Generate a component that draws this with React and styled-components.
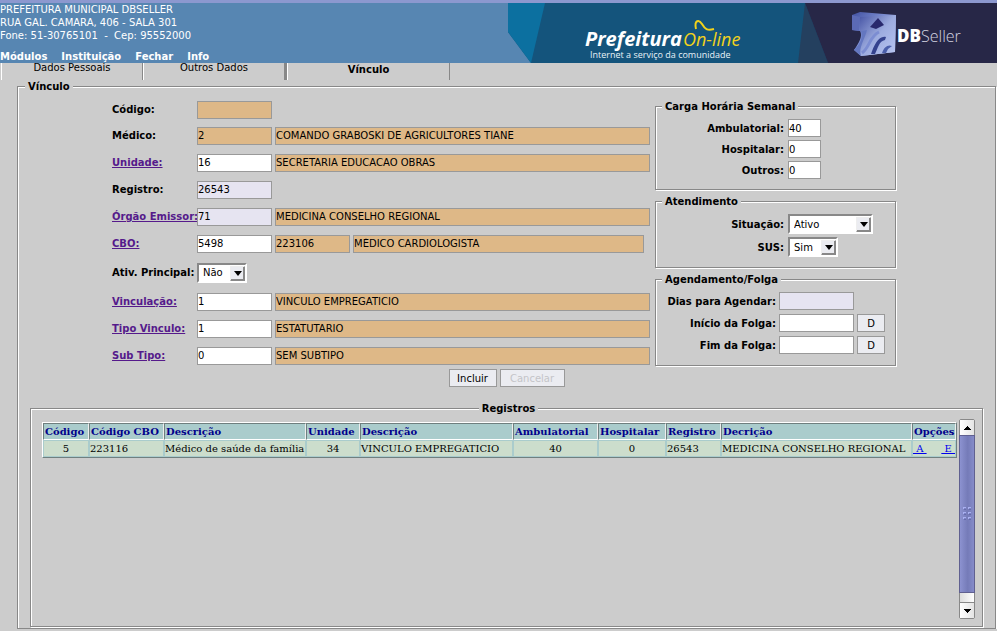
import React from "react";
import styled, { createGlobalStyle } from "styled-components";

const Global = createGlobalStyle`
  * { box-sizing: border-box; }
  html, body { margin: 0; background: #cccccc; }
  body { font: 10px/13px "DejaVu Sans", sans-serif; color: #000; overflow: hidden; }
  input, select, button { font: inherit; color: inherit; border-radius: 0; margin: 0; }
  a { color: #551a8b; }
`;

const Header = styled.header`
  display: flex;
  justify-content: space-between;
  height: 63px;
  border-top: 3px solid #4f4f84;
  border-image: linear-gradient(#8c98cf 66%, #48487a 66%) 3;
  background: #5786b2;
  color: #fff;
`;
const Identity = styled.div`
  display: flex;
  flex-direction: column;
  white-space: pre;
`;
const Menu = styled.nav`
  display: flex;
  gap: 14px;
  margin-top: 8px;
`;
const MenuLink = styled.a`
  color: #fff;
  font-weight: bold;
  text-decoration: none;
`;
const Banner = styled.svg`
  display: block;
  flex: none;
`;

const Tabs = styled.div`
  display: flex;
  height: 17px;
  padding-left: 1px;
`;
const Tab = styled.button`
  width: ${(p) => p.$width}px;
  height: 17px;
  padding: ${(p) => (p.$active ? "0 0 3px" : "0 0 7px")};
  line-height: 10px;
  border: 0;
  border-left: 1px solid #fff;
  border-right: ${(p) => p.$edge || 1}px solid #888;
  background: none;
  font-weight: ${(p) => (p.$active ? "bold" : "normal")};
`;

const Group = styled.fieldset`
  min-width: 0;
  margin: 0;
  padding: 0;
  border: 1px solid #888;
  box-shadow: 1px 1px 0 #fff, inset 1px 1px 0 #fff;
`;
const Legend = styled.legend`
  margin-left: 6px;
  padding: 0 3px;
  line-height: 13px;
  background: #ccc;
  font-weight: bold;
`;
const Main = styled(Group)`
  margin: 0 1px 0 17px;
  padding: 0 12px 1px;
`;
const MainLegend = styled(Legend)`
  margin-left: -5px;
`;

const FormArea = styled.div`
  display: flex;
  justify-content: center;
  gap: 5px;
  margin-top: 4px;
  padding-right: 5px;
`;
const Fields = styled.div`
  width: 538px;
`;
const FieldRow = styled.div`
  display: flex;
  align-items: center;
  gap: 3px;
  height: ${(p) => p.$height || 27}px;
`;
const FieldLabel = styled.label`
  width: 85px;
  margin-right: -3px;
  font-weight: bold;
  white-space: nowrap;
`;
const fills = { plain: "#fff", locked: "#deb887", soft: "#e6e4f1" };
const Input = styled.input`
  width: ${(p) => p.$width || 75}px;
  height: 18px;
  padding: 0;
  line-height: 16px;
  border: 1px solid #999;
  outline: 0;
  background: ${(p) => fills[p.$tone || "plain"]};
`;

const SelectBox = styled.span`
  position: relative;
  display: inline-block;
  width: ${(p) => p.$width}px;
  height: 20px;
  border: 2px solid;
  border-color: #888 #fff #fff #888;
  background: #fff;
`;
const Select = styled.select`
  width: 100%;
  height: 16px;
  padding: 0 16px 0 4px;
  border: 0;
  appearance: none;
  background: #fff;
  display: block;
`;
const Arrow = styled.span`
  position: absolute;
  top: 1px;
  right: 0;
  width: 15px;
  height: 15px;
  display: grid;
  place-items: center;
  border: 1px solid;
  border-color: #eee #888 #888 #eee;
  box-shadow: inset -1px -1px 0 #888;
  background: #ebecf1;
  pointer-events: none;
`;

const Side = styled.div`
  display: flex;
  flex-direction: column;
  width: 241px;
  margin-top: 3px;
  gap: 5px;
`;
const SideBody = styled.div`
  display: flex;
  flex-direction: column;
  gap: ${(p) => p.$gap}px;
  padding: ${(p) => p.$pad};
`;
const SideRow = styled.div`
  display: flex;
  align-items: center;
  gap: ${(p) => p.$gap || 4}px;
`;
const SideLabel = styled.label`
  width: ${(p) => p.$width || 128}px;
  text-align: right;
  font-weight: bold;
  white-space: nowrap;
`;
const Button = styled.button`
  width: ${(p) => p.$width}px;
  height: 18px;
  padding: 2px 0 0;
  border: 1px solid #999;
  background: #ebecf1;
  line-height: 14px;
  &:disabled { color: #c4c4c8; }
`;
const Actions = styled.div`
  display: flex;
  justify-content: center;
  gap: 3px;
  margin: 0 0 15px;
`;

const Records = styled(Group)`
  padding: 0 7px 7px 11px;
`;
const RecordsLegend = styled(Legend)`
  margin: 0 auto;
`;
const Scroller = styled.div`
  display: flex;
  gap: 4px;
  height: 200px;
  margin-top: 4px;
`;
const TableWrap = styled.div`
  flex: 1;
  min-width: 0;
  padding-top: 3px;
`;
const Table = styled.table`
  width: 100%;
  table-layout: fixed;
  border-collapse: separate;
  border-spacing: 0;
  border: 1px solid;
  border-color: #fff #6f7f7f #6f7f7f #fff;
  font: 10px/14px "DejaVu Serif", serif;
`;
const Th = styled.th`
  height: 17px;
  padding: 0 1px;
  border: 1px solid;
  border-color: #6f7f7f #eee #fff #6f7f7f;
  background: #aacccc;
  color: #00008b;
  text-align: left;
  white-space: nowrap;
`;
const Td = styled.td`
  height: 17px;
  padding: 0;
  border: 1px solid #aacccc;
  background: #ccddcc;
  text-align: ${(p) => (p.$center ? "center" : "left")};
  white-space: nowrap;
`;
const Options = styled.div`
  display: flex;
  justify-content: space-between;
`;
const Option = styled.a`
  color: #0000ee;
  white-space: pre;
`;

const Bar = styled.div`
  display: flex;
  flex-direction: column;
  width: 16px;
  background: linear-gradient(90deg, #ddd, #fff);
  border: 1px solid #888;
  border-radius: 2px;
`;
const BarButton = styled.button`
  display: grid;
  place-items: center;
  height: 15px;
  padding: 0;
  border: 0;
  background: linear-gradient(90deg, #fff, #e4e4e4);
`;
const Thumb = styled.div`
  display: grid;
  place-items: center;
  flex: 1;
  margin: 0 -1px;
  border: 1px solid #606090;
  background: linear-gradient(90deg, #8c92d0, #757bb8 55%, #858bc9);
`;
const Track = styled.div`
  height: 10px;
  border-bottom: 1px solid #888;
`;

const Triangle = ({ up }) => (
  <svg width="7" height="4" viewBox="0 0 7 4" aria-hidden="true" shapeRendering="crispEdges">
    <path d={up ? "M0 4L3.5 0L7 4Z" : "M0 0H7L3.5 4Z"} />
  </svg>
);

function Picker({ id, width, value, options }) {
  return (
    <SelectBox $width={width}>
      <Select id={id} defaultValue={value}>
        {options.map((o) => <option key={o}>{o}</option>)}
      </Select>
      <Arrow><svg width="8" height="5" viewBox="0 0 8 5"><path d="M0 0H8L4 5Z" /></svg></Arrow>
    </SelectBox>
  );
}

const rows = [
  { id: "codigo", label: "Código:", height: 25, inputs: [["", "locked"]] },
  { id: "medico", label: "Médico:", inputs: [["2", "locked"], ["COMANDO GRABOSKI DE AGRICULTORES TIANE", "locked", 375]] },
  { id: "unidade", label: "Unidade:", link: true, inputs: [["16"], ["SECRETARIA EDUCACAO OBRAS", "locked", 375]] },
  { id: "registro", label: "Registro:", inputs: [["26543", "soft"]] },
  { id: "orgao", label: "Órgão Emissor:", link: true, inputs: [["71", "soft"], ["MEDICINA CONSELHO REGIONAL", "locked", 375]] },
  { id: "cbo", label: "CBO:", link: true, inputs: [["5498"], ["223106", "locked"], ["MÉDICO CARDIOLOGISTA", "locked", 291]] },
  { id: "ativ", label: "Ativ. Principal:", height: 31, select: true },
  { id: "vinculacao", label: "Vinculação:", link: true, inputs: [["1"], ["VINCULO EMPREGATICIO", "locked", 375]] },
  { id: "tipo", label: "Tipo Vinculo:", link: true, inputs: [["1"], ["ESTATUTARIO", "locked", 375]] },
  { id: "subtipo", label: "Sub Tipo:", link: true, inputs: [["0"], ["SEM SUBTIPO", "locked", 375]] },
];

const columns = [
  [46, "Código", "5", true],
  [75, "Código CBO", "223116"],
  [142, "Descrição", "Médico de saúde da família"],
  [54, "Unidade", "34", true],
  [153, "Descrição", "VINCULO EMPREGATICIO"],
  [85, "Ambulatorial", "40", true],
  [68, "Hospitalar", "0", true],
  [55, "Registro", "26543"],
  [191, "Decrição", "MEDICINA CONSELHO REGIONAL"],
  [44, "Opções"],
];

function BannerArt() {
  return (
    <Banner width="489" height="60" viewBox="0 0 489 60" role="img" aria-label="Prefeitura On-line DBSeller">
      <defs>
        <linearGradient id="face" x1="0" y1="0" x2="1" y2="1">
          <stop offset="0" stopColor="#3f4fa0" />
          <stop offset="0.5" stopColor="#8a9bdc" />
          <stop offset="1" stopColor="#a9b9ee" />
        </linearGradient>
        <linearGradient id="side" x1="0" y1="0" x2="1" y2="1">
          <stop offset="0" stopColor="#4856a6" />
          <stop offset="0.5" stopColor="#9dacdf" />
          <stop offset="1" stopColor="#b9c6f2" />
        </linearGradient>
      </defs>
      <path d="M0 0H489V60H23L0 29Z" fill="#14547c" />
      <path d="M0 0H37L23 60L0 29Z" fill="#0c70a0" />
      <path d="M297 0L320 60H290Z" fill="#24405f" />
      <path d="M297 0H489V60H320Z" fill="#272747" />
      <text x="77" y="43" fill="#fff" fontFamily="Open Sans, sans-serif" fontSize="20" fontWeight="700" fontStyle="italic">Prefeitura</text>
      <text x="175" y="43" fill="#f2d21b" fontFamily="Open Sans, sans-serif" fontSize="18" fontStyle="italic">On-line</text>
      <path d="M188 26C186 17 191 16 194 21S199 28 206 26" fill="none" stroke="#f2d21b" strokeWidth="2" />
      <text x="82" y="55" fill="#e8f2f8" fontFamily="Open Sans, sans-serif" fontSize="9">Internet a serviço da comunidade</text>
      <path d="M344 12L352 9L388 12L387 49L353 53L346 47C351 40 355 33 352 28L344 27Z" fill="url(#face)" />
      <path d="M344 12L352 14L351 28L344 27Z" fill="#5b6ab5" />
      <path d="M352 14L388 12L387 49L353 53C350 45 357 35 359 27L352 28Z" fill="url(#side)" />
      <path d="M346 47C353 40 355 34 353 28L359 27C357 36 350 45 353 53Z" fill="#6477c0" />
      <path d="M370 15L376 22L368 26L362 24Z" fill="#29296d" />
      <path d="M354 50C362 44 361 34 371 29" fill="none" stroke="#7c8dd2" strokeWidth="3" />
      <path d="M363 51C366 42 371 32 378 34L377 37C371 38 370 45 367 51Z" fill="#34428e" />
      <path d="M374 50C376 44 380 41 384 43L380 46L378 50Z" fill="#4b5fab" />
      <text x="389" y="39" fill="#fff" fontFamily="Open Sans, sans-serif" fontSize="17" fontWeight="800">DB</text>
      <text x="413" y="39" fill="#d4d4e0" fontFamily="Open Sans, sans-serif" fontSize="16" fontWeight="300">Seller</text>
    </Banner>
  );
}

export default function App() {
  return (
    <>
      <Global />
      <Header>
        <Identity>
          <span>PREFEITURA MUNICIPAL DBSELLER</span>
          <span>RUA GAL. CAMARA, 406 - SALA 301</span>
          <span>{"Fone: 51-30765101  -  Cep: 95552000"}</span>
          <Menu>
            {["Módulos", "Instituição", "Fechar", "Info"].map((m) => <MenuLink key={m} href="#">{m}</MenuLink>)}
          </Menu>
        </Identity>
        <BannerArt />
      </Header>
      <Tabs>
        <Tab $width={142}>Dados Pessoais</Tab>
        <Tab $width={144} $edge={3}>Outros Dados</Tab>
        <Tab $width={163} $active>Vínculo</Tab>
      </Tabs>
      <Main>
        <MainLegend>Vínculo</MainLegend>
        <FormArea>
          <Fields>
            {rows.map((r) => (
              <FieldRow key={r.id} $height={r.height}>
                <FieldLabel htmlFor={r.id}>{r.link ? <a href="#">{r.label}</a> : r.label}</FieldLabel>
                {r.select && <Picker id={r.id} width={50} value="Não" options={["Não", "Sim"]} />}
                {(r.inputs || []).map(([value, tone, width], i) => (
                  <Input key={i} id={i ? undefined : r.id} aria-label={i ? r.label + " descrição" : undefined}
                    defaultValue={value} $tone={tone} $width={width} readOnly={tone === "locked"} />
                ))}
              </FieldRow>
            ))}
          </Fields>
          <Side>
            <Group>
              <Legend>Carga Horária Semanal</Legend>
              <SideBody $gap={3} $pad="6px 0 10px">
                {[["ambulatorial", "Ambulatorial:", "40"], ["hospitalar", "Hospitalar:", "0"], ["outros", "Outros:", "0"]].map(([id, l, v]) => (
                  <SideRow key={id}>
                    <SideLabel htmlFor={id}>{l}</SideLabel>
                    <Input id={id} defaultValue={v} $width={33} />
                  </SideRow>
                ))}
              </SideBody>
            </Group>
            <Group>
              <Legend>Atendimento</Legend>
              <SideBody $gap={3} $pad="6px 0 10px">
                <SideRow>
                  <SideLabel htmlFor="situacao">Situação:</SideLabel>
                  <Picker id="situacao" width={85} value="Ativo" options={["Ativo", "Inativo"]} />
                </SideRow>
                <SideRow>
                  <SideLabel htmlFor="sus">SUS:</SideLabel>
                  <Picker id="sus" width={50} value="Sim" options={["Sim", "Não"]} />
                </SideRow>
              </SideBody>
            </Group>
            <Group>
              <Legend>Agendamento/Folga</Legend>
              <SideBody $gap={4} $pad="6px 0 11px">
                <SideRow $gap={3}>
                  <SideLabel $width={120} htmlFor="dias">Dias para Agendar:</SideLabel>
                  <Input id="dias" $tone="soft" />
                </SideRow>
                <SideRow $gap={3}>
                  <SideLabel $width={120} htmlFor="inicio">Início da Folga:</SideLabel>
                  <Input id="inicio" />
                  <Button $width={28}>D</Button>
                </SideRow>
                <SideRow $gap={3}>
                  <SideLabel $width={120} htmlFor="fim">Fim da Folga:</SideLabel>
                  <Input id="fim" />
                  <Button $width={28}>D</Button>
                </SideRow>
              </SideBody>
            </Group>
          </Side>
        </FormArea>
        <Actions>
          <Button $width={48}>Incluir</Button>
          <Button $width={65} disabled>Cancelar</Button>
        </Actions>
        <Records>
          <RecordsLegend>Registros</RecordsLegend>
          <Scroller>
            <TableWrap>
              <Table>
                <colgroup>{columns.map(([w], i) => <col key={i} width={w} />)}</colgroup>
                <thead><tr>{columns.map(([, h], i) => <Th key={i}>{h}</Th>)}</tr></thead>
                <tbody>
                  <tr>
                    {columns.map(([, , v, center], i) => (
                      <Td key={i} $center={center}>
                        {v || <Options><Option href="#">{" A "}</Option><Option href="#">{" E "}</Option></Options>}
                      </Td>
                    ))}
                  </tr>
                </tbody>
              </Table>
            </TableWrap>
            <Bar>
              <BarButton aria-label="Subir"><Triangle up /></BarButton>
              <Thumb>
                <svg width="9" height="14" viewBox="0 0 9 14" aria-hidden="true">
                  <path d="M0 1H3M5 1H8M0 6H3M5 6H8M0 11H3M5 11H8" stroke="#a9b0f0" strokeWidth="2" />
                  <path d="M1 2H3M6 2H8M1 7H3M6 7H8M1 12H3M6 12H8" stroke="#50569a" />
                </svg>
              </Thumb>
              <Track />
              <BarButton aria-label="Descer"><Triangle /></BarButton>
            </Bar>
          </Scroller>
        </Records>
      </Main>
    </>
  );
}
